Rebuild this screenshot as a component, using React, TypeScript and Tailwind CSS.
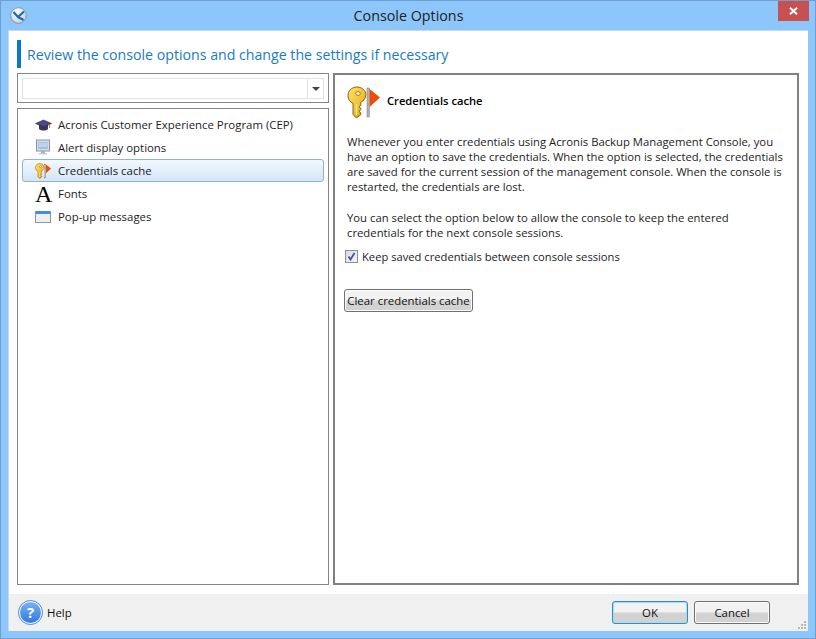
import React from "react";

function KeyIcon({ size }: { size: number }) {
  return (
    <svg width={size} height={size} viewBox="0 0 33 33" className="shrink-0">
      <defs>
        <linearGradient id={`k${size}`} x1="0" y1="0" x2="1" y2="1">
          <stop offset="0" stopColor="#ffe070" />
          <stop offset="0.6" stopColor="#f0bf30" />
          <stop offset="1" stopColor="#c48c10" />
        </linearGradient>
      </defs>
      <path d="M10 1C4.8 1 1 4.8 1 9.6c0 3.6 2 6.4 5 7.8V28.5l3.5 3.5 4.3-3.3v-2l-1.8-1.4 1.8-1.5v-1.6l-1.8-1.4 1.8-1.5v-3c3-1.4 5-4.2 5-7.8C19 4.8 15.2 1 10 1z" fill={`url(#k${size})`} stroke="#8a6408" strokeWidth="1" />
      <ellipse cx="11" cy="7.5" rx="2.3" ry="1.9" fill="#fff6c8" stroke="#8a6408" strokeWidth="0.8" />
      <path d="M9.5 18v11" stroke="#fff0a0" strokeWidth="1.2" />
      <rect x="20" y="2" width="2.4" height="29" fill="#b4b4b4" stroke="#7a7a7a" strokeWidth="0.5" />
      <path d="M22.6 3 L33 11.5 L22.6 21 Z" fill="#ee4d0c" />
    </svg>
  );
}

function SmallRow({ icon, label, selected }: { icon: React.ReactNode; label: string; selected?: boolean }) {
  return (
    <div
      className={
        "h-[23px] flex items-center rounded-[3px] border " +
        (selected
          ? "border-[#8fb2d6] bg-gradient-to-b from-[#f2f8fe] to-[#d3e5f8]"
          : "border-transparent")
      }
    >
      <div className="w-[35px] pl-[12px] flex justify-start shrink-0">{icon}</div>
      <span className="text-[11.4px] text-[#1c1c1c]">{label}</span>
    </div>
  );
}

function Button({ label, primary, className }: { label: string; primary?: boolean; className: string }) {
  return (
    <div
      className={
        "flex items-center justify-center whitespace-nowrap rounded-[3px] border bg-gradient-to-b from-[#f2f2f2] from-45% to-[#d2d2d2] to-55% text-[11.4px] text-[#111] " +
        (primary ? "border-[#2a8fc4] shadow-[inset_0_0_0_1px_#a8dcf4] " : "border-[#707070] shadow-[inset_0_0_0_1px_#fbfbfb] ") +
        className
      }
    >
      {label}
    </div>
  );
}

export default function App() {
  return (
    <div className="w-[816px] h-[639px] bg-[#8cc6fa] border border-[#6f9fd0] flex flex-col overflow-hidden font-['Open_Sans','Noto_Sans',sans-serif]">
      {/* Title bar */}
      <div className="h-[29px] shrink-0 flex items-start relative">
        <div className="pl-[9px] pt-[6px]">
          <svg width="17" height="17" viewBox="0 0 17 17">
            <defs>
              <radialGradient id="lg" cx="0.4" cy="0.3" r="0.8">
                <stop offset="0" stopColor="#ffffff" />
                <stop offset="1" stopColor="#c6ccd4" />
              </radialGradient>
            </defs>
            <circle cx="8.5" cy="8.5" r="7.8" fill="url(#lg)" stroke="#7d8794" strokeWidth="0.8" />
            <path d="M3.5 5 L8 10 L14 4.5 M8 10 L13.5 13" fill="none" stroke="#1569c7" strokeWidth="2.2" />
          </svg>
        </div>
        <div className="flex-1 text-center text-[14.3px] leading-[30px] text-[#222] ml-[12px]">Console Options</div>
        <div className="w-[31px] h-[20px] mr-[6px] bg-[#c75050] flex items-center justify-center shrink-0">
          <svg width="9" height="8" viewBox="0 0 9 8">
            <path d="M1 0.8 L8 7.2 M8 0.8 L1 7.2" stroke="#fff" strokeWidth="2" />
          </svg>
        </div>
      </div>

      {/* Client */}
      <div className="mx-[7px] w-[800px] h-[601px] bg-white border-l border-t border-[#6f9fd0]/40 flex flex-col">
        <div className="flex-1 flex flex-col pl-[8px] pr-[8px] pt-[9px] min-h-0">
          <div className="h-[28px] border-l-[4px] border-[#0a78c8] pl-[6px] pt-[1px] flex items-center text-[14.16px] text-[#1a7cc0] shrink-0">
            Review the console options and change the settings if necessary
          </div>
          <div className="flex gap-[4px] mt-[5px] h-[512px]">
            <div className="w-[312px] flex flex-col gap-[5px]">
              <div className="h-[30px] border border-[#858585] p-[4px] shrink-0">
                <div className="h-[21px] border border-[#dfe4ea] flex justify-end">
                  <div className="w-[16px] border-l border-[#dfe4ea] flex items-center justify-center">
                    <div className="w-0 h-0 border-l-[4px] border-r-[4px] border-t-[4px] border-l-transparent border-r-transparent border-t-[#444]" />
                  </div>
                </div>
              </div>
              <div className="flex-1 border border-[#858585] pt-[4px] px-[4px]">
                <SmallRow
                  label="Acronis Customer Experience Program (CEP)"
                  icon={
                    <svg width="17" height="14" viewBox="0 0 17 14">
                      <path d="M4 7 V11 C6 13 11 13 13 11 V7 Z" fill="#3d3560" />
                      <path d="M0.5 5.5 L8.5 2 L16.5 5.5 L8.5 9 Z" fill="#4a4688" stroke="#2b2755" strokeWidth="0.6" />
                      <path d="M14.5 6.5 V10" stroke="#c98a2b" strokeWidth="1.2" />
                    </svg>
                  }
                />
                <SmallRow
                  label="Alert display options"
                  icon={
                    <svg width="16" height="17" viewBox="0 0 16 17">
                      <rect x="1.5" y="1" width="13" height="11" fill="#d5dde4" stroke="#8a97a2" />
                      <rect x="3.5" y="3" width="9" height="7" fill="#7aa6d8" />
                      <path d="M5 3v7M7 3v7M9 3v7M11 3v7M3.5 5h9M3.5 7h9" stroke="#fff" strokeWidth="0.6" />
                      <rect x="6" y="12" width="4" height="2" fill="#a9b2ba" />
                      <rect x="4" y="14" width="8" height="1.5" fill="#c5ccd2" />
                    </svg>
                  }
                />
                <SmallRow selected label="Credentials cache" icon={<KeyIcon size={16} />} />
                <SmallRow
                  label="Fonts"
                  icon={<span className="font-['Liberation_Serif',serif] text-[24px] leading-[20px] text-black">A</span>}
                />
                <SmallRow
                  label="Pop-up messages"
                  icon={
                    <div className="w-[16px] h-[12px] border border-[#8a97a2] rounded-[1px] bg-[#eceff2] border-t-[3px] border-t-[#3f8fdc]" />
                  }
                />
              </div>
            </div>

            <div className="w-[466px] border-2 border-[#808080] px-[12px] text-[11.3px] leading-[15px] text-[#1c1c1c]">
              <div className="h-[33px] mt-[11px] flex items-center gap-[7px]">
                <KeyIcon size={33} />
                <span className="font-semibold text-black text-[11.2px] mb-[5px]">Credentials cache</span>
              </div>
              <p className="mt-[15px] w-[438px]">
                Whenever you enter credentials using Acronis Backup Management Console, you have an option to save the credentials. When the option is selected, the credentials are saved for the current session of the management console. When the console is restarted, the credentials are lost.
              </p>
              <p className="mt-[16px] w-[438px]">
                You can select the option below to allow the console to keep the entered credentials for the next console sessions.
              </p>
              <div className="flex items-center gap-[4px] mt-[9px] h-[15px] -ml-[2px]">
                <div className="w-[13px] h-[13px] border border-[#8e8f8f] bg-gradient-to-br from-[#d8dce2] to-[#f4f5f7] flex items-center justify-center">
                  <svg width="9" height="9" viewBox="0 0 9 9">
                    <path d="M1.5 4.5 L3.5 7.5 L7.5 1" fill="none" stroke="#3d54a8" strokeWidth="1.8" />
                  </svg>
                </div>
                <span className="text-[11.2px]">Keep saved credentials between console sessions</span>
              </div>
              <Button label="Clear credentials cache" className="w-[129px] h-[23px] mt-[25px] -ml-[3px]" />
            </div>
          </div>
        </div>

        {/* Footer */}
        <div className="h-[37px] bg-[#f0f0f0] flex items-center shrink-0 relative">
          <div className="pl-[9px] flex items-center gap-[4px]">
            <div className="w-[25px] h-[25px] rounded-full border border-[#3f86e0] bg-white p-[1px]">
              <div className="w-full h-full rounded-full bg-gradient-to-b from-[#79b2f2] to-[#2f78de] flex items-center justify-center text-white font-bold text-[15px] leading-none">?</div>
            </div>
            <span className="text-[11.4px] text-[#111]">Help</span>
          </div>
          <div className="ml-auto flex gap-[6px] pr-[38px]">
            <Button primary label="OK" className="w-[76px] h-[23px]" />
            <Button label="Cancel" className="w-[76px] h-[23px]" />
          </div>
          <div className="absolute right-[2px] bottom-[2px] grid grid-cols-3 gap-[1px]">
            {[0, 0, 1, 0, 1, 1, 1, 1, 1].map((v, i) => (
              <div key={i} className={"w-[2px] h-[2px] " + (v ? "bg-[#b8b8b8]" : "bg-transparent")} />
            ))}
          </div>
        </div>
      </div>
    </div>
  );
}
